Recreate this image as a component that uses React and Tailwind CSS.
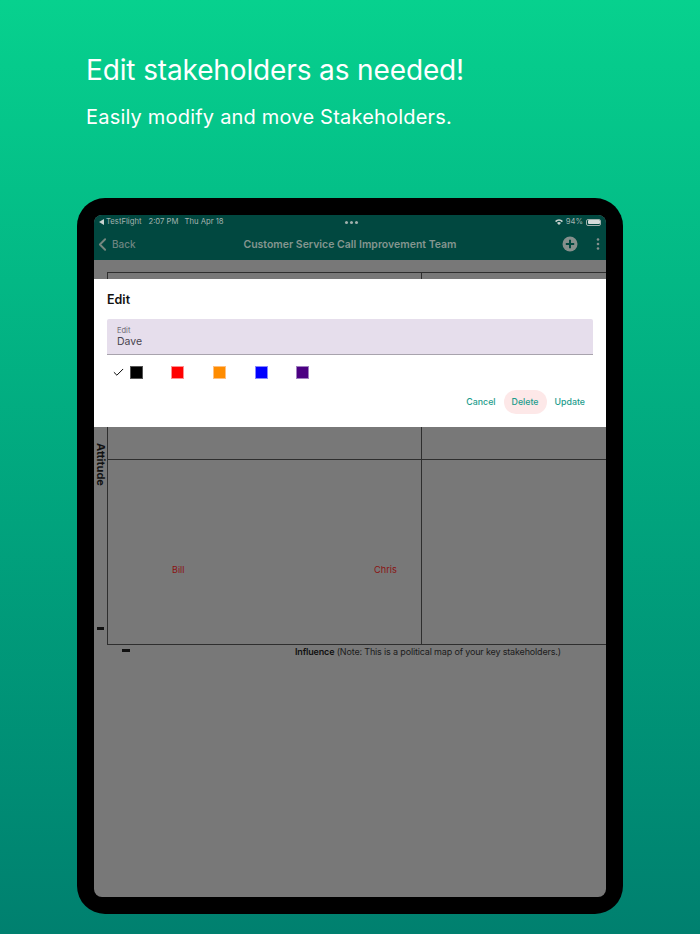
import React from "react";
import { ChevronLeft, Check } from "lucide-react";

function Swatch({ color, ring }) {
  return <div className={`w-[13px] h-[13px] border-[0.5px] ${color} ${ring}`} />;
}

export default function App() {
  return (
    <div
      className="w-[700px] h-[934px] overflow-hidden bg-gradient-to-b from-[#07d18e] to-[#00806f] font-['Inter','Liberation_Sans',sans-serif]"
    >
      <div className="pl-[86px] pt-[52px] h-[198px] text-white">
        <h1 className="text-[28px] leading-[36px] tracking-[-0.13px] font-normal">Edit stakeholders as needed!</h1>
        <p className="mt-[15px] text-[20px] leading-[28px] tracking-[0.2px]">Easily modify and move Stakeholders.</p>
      </div>

      <div className="mx-[77px] w-[546px] h-[716px] rounded-[28px] bg-black p-[17px]">
        <div className="relative w-[512px] h-[682px] rounded-[8px] overflow-hidden bg-[#787878]">
          <div className="bg-[#014840] h-[45px]">
            <div className="h-[14px] flex items-center justify-between pl-[5px] pr-[5px] text-[7.7px] leading-[14px] text-[#a3b3af]">
              <div className="flex items-center">
                <svg width="5" height="6" viewBox="0 0 5 6" className="mr-[2px]"><path d="M0 3 L5 0 V6 Z" fill="#c8d2cf" /></svg>
                <span>TestFlight</span>
                <span className="ml-[7px]">2:07 PM</span>
                <span className="ml-[6px]">Thu Apr 18</span>
              </div>
              <div className="flex items-center">
                <svg width="8" height="6" viewBox="0 0 8 6" className="mr-[3px]"><path d="M0 2 A5.5 5.5 0 0 1 8 2 L6.8 3.2 A4 4 0 0 0 1.2 3.2 Z M2 4 A3 3 0 0 1 6 4 L4 6 Z" fill="#c8d2cf" /></svg>
                <span>94%</span>
                <div className="ml-[3px] w-[15px] h-[7px] rounded-[2px] border-[0.5px] border-[#9fb0ac] p-[0.5px]">
                  <div className="w-full h-full rounded-[1px] bg-[#d5dcda]" />
                </div>
              </div>
            </div>
            <div className="relative h-[31px] flex items-center justify-center">
              <div className="absolute left-0 top-[5px] flex items-center">
                <ChevronLeft size={21} strokeWidth={2.2} className="text-[#76877f] -ml-[2px] -mr-[1px]" />
                <span className="text-[10px] font-medium text-[#6e8581]">Back</span>
              </div>
              <span className="text-[10.5px] font-semibold text-[#84958f]">Customer Service Call Improvement Team</span>
              <svg width="16" height="16" viewBox="0 0 16 16" className="absolute right-[28px] top-[7px]">
                <circle cx="8" cy="8" r="7.5" fill="#858f8c" />
                <path d="M8 3.8 V12.2 M3.8 8 H12.2" stroke="#014840" strokeWidth="2" />
              </svg>
              <svg width="4" height="12" viewBox="0 0 4 12" className="absolute right-[6px] top-[9px]">
                <circle cx="2" cy="1.5" r="1.3" fill="#858f8c" />
                <circle cx="2" cy="6" r="1.3" fill="#858f8c" />
                <circle cx="2" cy="10.5" r="1.3" fill="#858f8c" />
              </svg>
            </div>
          </div>

          <div className="absolute left-[149px] top-[6px] flex gap-[2.5px]">
            <i className="ml-[102px] w-[2.5px] h-[2.5px] rounded-full bg-[#9fb0ac]" />
            <i className="w-[2.5px] h-[2.5px] rounded-full bg-[#9fb0ac]" />
            <i className="w-[2.5px] h-[2.5px] rounded-full bg-[#9fb0ac]" />
          </div>

          <div className="pl-[13px] pt-[12px] flex">
            <div className="relative w-[499px] h-[373px] border-l border-t border-b border-[#2e2e2e]">
              <div className="h-[187px] border-b border-[#2e2e2e]" />
              <div className="absolute left-[313px] top-0 bottom-0 w-px bg-[#2e2e2e]" />
              <span className="absolute left-[64px] top-[291px] text-[9px] leading-[12px] text-[#8a1212]">Bill</span>
              <span className="absolute left-[266px] top-[291px] text-[9.2px] leading-[12px] text-[#8a1212]">Chris</span>
              <span className="absolute -left-[14px] top-[170px] text-[11px] leading-[13px] font-bold text-[#111] [writing-mode:vertical-rl]">Attitude</span>
              <i className="absolute -left-[11px] top-[354px] w-[7px] h-[3px] bg-[#111]" />
              <i className="absolute left-[14px] top-[376px] w-[8px] h-[3px] bg-[#111]" />
            </div>
          </div>
          <p className="pl-[201px] text-[9px] leading-[13px] text-[#1c1c1c] tracking-[-0.16px]">
            <b className="font-semibold text-[#111]">Influence</b> (Note: This is a political map of your key stakeholders.)
          </p>

          <div className="absolute left-0 right-0 top-[64px] h-[148px] bg-white px-[13px]">
            <h2 className="pt-[12px] text-[12.5px] leading-[17px] font-semibold text-[#111]">Edit</h2>
            <div className="mt-[11px] h-[36px] bg-[#e6deec] border-b border-[#a8a3ad] rounded-t-[2px] pl-[10px] pt-[7px]">
              <div className="text-[7.5px] leading-[9px] text-[#6b6670]">Edit</div>
              <div className="text-[10.5px] leading-[13px] text-[#49454f]">Dave</div>
            </div>
            <div className="mt-[11px] flex items-center pl-[5px] h-[13px]">
              <Check size={13} strokeWidth={1.8} className="text-black mr-[4.5px]" />
              <div className="flex gap-[28.7px]">
                <Swatch color="bg-black" ring="border-[#555]" />
                <Swatch color="bg-[#ff0000]" ring="border-[#ff9090]" />
                <Swatch color="bg-[#ff8c00]" ring="border-[#ffc080]" />
                <Swatch color="bg-[#0000ff]" ring="border-[#8888ff]" />
                <Swatch color="bg-[#4b0082]" ring="border-[#a080c0]" />
              </div>
            </div>
            <div className="mt-[11px] flex items-center justify-end pr-[8px] text-[8.8px] font-medium text-[#1c9c8c]">
              <span>Cancel</span>
              <span className="ml-[8px] h-[24px] w-[43px] rounded-full bg-[#fde8e8] flex items-center justify-center">Delete</span>
              <span className="ml-[8px]">Update</span>
            </div>
          </div>
        </div>
      </div>
    </div>
  );
}
